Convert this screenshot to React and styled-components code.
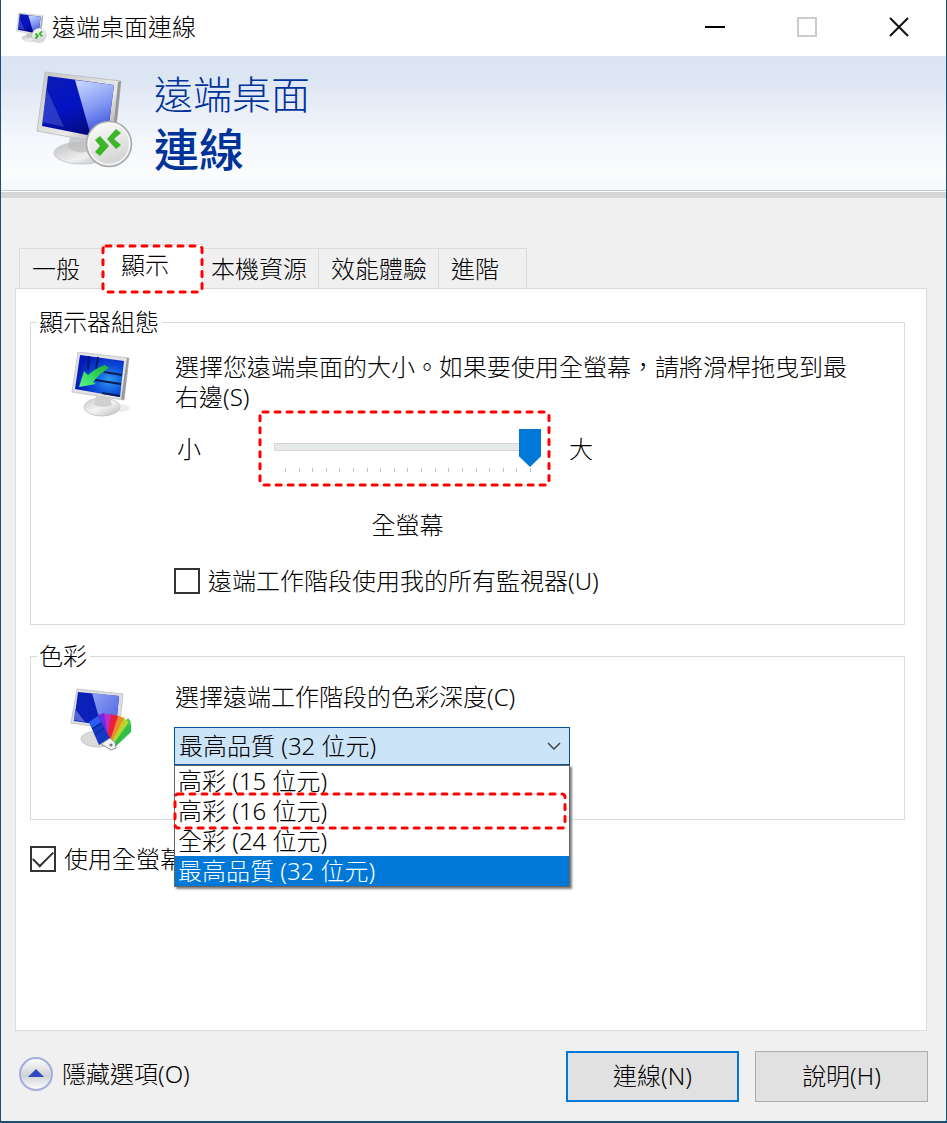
import React, { useState } from 'react';
import styled, { createGlobalStyle, css } from 'styled-components';

const options = ['高彩 (15 位元)', '高彩 (16 位元)', '全彩 (24 位元)', '最高品質 (32 位元)'];
const ticks = Array.from({ length: 19 }, (_, i) => i);

function RemoteIcon({ size, id }) {
    return (
        <svg width={size} height={size} viewBox="36 70 98 98" aria-hidden="true">
            <defs>
                <linearGradient id={id + 'frame'} x1="0" y1="0" x2="1" y2="1">
                    <stop offset="0" stopColor="#c4c4c0" />
                    <stop offset="0.6" stopColor="#e9e9e7" />
                    <stop offset="1" stopColor="#8f8f8f" />
                </linearGradient>
                <linearGradient id={id + 'dark'} x1="0" y1="0" x2="0.5" y2="1">
                    <stop offset="0" stopColor="#0a1cb4" />
                    <stop offset="0.55" stopColor="#0413c4" />
                    <stop offset="1" stopColor="#020a78" />
                </linearGradient>
                <linearGradient id={id + 'light'} x1="0.3" y1="0" x2="0.6" y2="1">
                    <stop offset="0" stopColor="#c3d2ff" />
                    <stop offset="0.5" stopColor="#7f95f2" />
                    <stop offset="1" stopColor="#2c40d4" />
                </linearGradient>
                <linearGradient id={id + 'base'} x1="0" y1="0" x2="1" y2="1">
                    <stop offset="0" stopColor="#bdbdbd" />
                    <stop offset="0.6" stopColor="#efefef" />
                    <stop offset="1" stopColor="#b5b5b5" />
                </linearGradient>
                <linearGradient id={id + 'disc'} x1="0" y1="0" x2="0.4" y2="1">
                    <stop offset="0" stopColor="#ffffff" />
                    <stop offset="1" stopColor="#d4d4d4" />
                </linearGradient>
            </defs>
            <ellipse cx="82" cy="153" rx="28" ry="11" fill={`url(#${id}base)`} stroke="#c9ccd0" />
            <path d="M70 136l-2 12q10 7 22 3l-1-12z" fill="#b9babc" opacity="0.7" />
            <path d="M45 72l76 9-7 64-77-14z" fill={`url(#${id}frame)`} stroke="#bfc2c6" strokeWidth="1" />
            <path d="M118 82l3-1-6 58-3 2z" fill="#96999c" />
            <path d="M48 76l66 9-7 54-65-13z" fill={`url(#${id}dark)`} />
            <path d="M75 80l39 5-7 54-16-3z" fill={`url(#${id}light)`} />
            <path d="M47 90l17 37-22-5z" fill="#7481d8" opacity="0.35" />
            <circle cx="109" cy="144" r="22.5" fill={`url(#${id}disc)`} stroke="#aaadb0" strokeWidth="1.6" />
            <circle cx="109" cy="144" r="20.5" fill="none" stroke="#f7f7f7" strokeWidth="1.4" />
            <path d="M95 140l5-4 9 10-9 10-5-4 5-6z" fill="#3cb528" />
            <path d="M116 129l5 4-7 6 7 6-5 4-9-10z" fill="#3cb528" />
        </svg>
    );
}

function DisplayIcon() {
    return (
        <svg width="66" height="68" viewBox="0 2 66 68" aria-hidden="true">
            <defs>
                <radialGradient id="displayScreen" cx="0.7" cy="0.6" r="0.7">
                    <stop offset="0" stopColor="#2d9cf0" />
                    <stop offset="0.5" stopColor="#0c4ad8" />
                    <stop offset="1" stopColor="#0218b8" />
                </radialGradient>
                <linearGradient id="displayBase" x1="0" y1="0" x2="1" y2="1">
                    <stop offset="0" stopColor="#c9c9c9" />
                    <stop offset="0.5" stopColor="#f4f4f4" />
                    <stop offset="1" stopColor="#b8b8b8" />
                </linearGradient>
                <linearGradient id="displayArrow" x1="1" y1="0" x2="0" y2="1">
                    <stop offset="0" stopColor="#1fae35" />
                    <stop offset="0.5" stopColor="#35d65c" />
                    <stop offset="1" stopColor="#5df58c" />
                </linearGradient>
            </defs>
            <ellipse cx="48" cy="58" rx="12" ry="4" fill="#ececec" />
            <ellipse cx="32" cy="57" rx="18" ry="9" fill="url(#displayBase)" stroke="#cacaca" />
            <path d="M26 46l-2 9q9 4 18 0l-2-7z" fill="#d0d0d0" />
            <path d="M8 2l51 6-5 42-52-8z" fill="#e2e2e2" stroke="#c8c8c8" />
            <path d="M57 8l2 0-5 42-3-1z" fill="#9a9a9a" />
            <path d="M10 5l44 6-4 36-45-8z" fill="url(#displayScreen)" />
            <path d="M19 6l-1 14M28 7l-2 12" stroke="#071a66" strokeWidth="2" />
            <path d="M34 22l18 3M25 30l26 4M32 43l18 3" stroke="#0a1c56" strokeWidth="2" />
            <path d="M35 15l4 3q-9 5-16 14l3 2-17 3 5-16 4 4q8-7 17-10z" fill="url(#displayArrow)" />
        </svg>
    );
}

function ColorIcon() {
    return (
        <svg width="66" height="68" viewBox="0 0 66 68" aria-hidden="true">
            <defs>
                <linearGradient id="colorScreen" x1="0" y1="0" x2="1" y2="1">
                    <stop offset="0" stopColor="#8fa2f4" />
                    <stop offset="1" stopColor="#4a62e2" />
                </linearGradient>
            </defs>
            <ellipse cx="28" cy="51" rx="17" ry="8" fill="#dadada" stroke="#cacaca" />
            <path d="M7 1l46 5-4 36-48-7z" fill="#dedede" stroke="#c8c8c8" />
            <path d="M8 4l41 4-3 31-42-6z" fill="#0a20b8" />
            <path d="M22 5l27 3-3 31-15-2z" fill="url(#colorScreen)" />
            <path d="M5 21l10 13-11-2z" fill="#5567cf" />
            <path d="M61 34l-3-4-18 26 4 5z" fill="#36c94c" />
            <path d="M61 35l0 9-18 17-4-5z" fill="#2fc048" />
            <path d="M53 29l6 5-17 24-5-5z" fill="#b4d62c" />
            <path d="M47 27l7 3-14 27-5-5z" fill="#f08a2a" />
            <path d="M40 26l8 2-9 28-5-4z" fill="#e8203c" />
            <path d="M33 25l8 2-5 27-6-6z" fill="#c02ad0" />
            <path d="M28 27l6-2 4 27-5-2z" fill="#6a2de0" />
            <path d="M19 34l9-6 12 22-11 7z" fill="#1438c4" />
            <path d="M19 34l9-6 3 6-9 6z" fill="#2c5cf4" />
            <path d="M22 41l9-6M25 46l9-6" stroke="#0a2080" />
            <path d="M31 56l9-6 5 4 1 6-5 2z" fill="#f2f2f2" stroke="#8a8a8a" />
            <circle cx="41" cy="57" r="1.5" fill="#777" />
        </svg>
    );
}

function CollapseIcon() {
    return (
        <svg width="34" height="34" viewBox="0 0 34 34" aria-hidden="true">
            <defs>
                <linearGradient id="collapse" x1="0" y1="0" x2="0" y2="1">
                    <stop offset="0" stopColor="#ffffff" />
                    <stop offset="0.55" stopColor="#cfd2d4" />
                    <stop offset="1" stopColor="#ffffff" />
                </linearGradient>
            </defs>
            <circle cx="17" cy="17" r="16" fill="url(#collapse)" stroke="#a3addf" strokeWidth="2" />
            <path d="M17 12l8 8H9z" fill="#3048c0" />
        </svg>
    );
}

function Highlight() {
    return (
        <Dashes aria-hidden="true">
            <rect x="0" y="0" width="100%" height="100%" rx="3" />
        </Dashes>
    );
}

function App() {
    const [size, setSize] = useState(18);
    const [allMonitors, setAllMonitors] = useState(false);
    const [bar, setBar] = useState(true);
    const [depth, setDepth] = useState(options[3]);

    return (
        <Window>
            <GlobalStyle />
            <TitleBar>
                <RemoteIcon size={31} id="small" />
                <Title>遠端桌面連線</Title>
                <WindowButton aria-label="最小化">
                    <svg width="20" height="20"><path d="M0 10h20" stroke="#000" strokeWidth="2" /></svg>
                </WindowButton>
                <WindowButton aria-label="最大化" disabled>
                    <svg width="20" height="20"><path d="M1 1h18v18H1z" fill="none" stroke="#ccc" strokeWidth="2" /></svg>
                </WindowButton>
                <WindowButton aria-label="關閉">
                    <svg width="20" height="20"><path d="M1 1l18 18M19 1L1 19" stroke="#111" strokeWidth="2" /></svg>
                </WindowButton>
            </TitleBar>

            <Banner>
                <RemoteIcon size={98} id="large" />
                <BannerTitle>
                    遠端桌面
                    <strong>連線</strong>
                </BannerTitle>
            </Banner>

            <Body>
                <Tabs role="tablist">
                    <Tab role="tab">一般</Tab>
                    <Tab role="tab" aria-selected="true" $active>
                        顯示
                        <TabMark><Highlight /></TabMark>
                    </Tab>
                    <Tab role="tab" $tucked>本機資源</Tab>
                    <Tab role="tab">效能體驗</Tab>
                    <Tab role="tab">進階</Tab>
                </Tabs>

                <Panel role="tabpanel">
                    <Group>
                        <Legend>顯示器組態</Legend>
                        <GroupGrid $top={15} $bottom={28}>
                            <IconCell><DisplayIcon /></IconCell>
                            <div>
                                <Text htmlFor="size">選擇您遠端桌面的大小。如果要使用全螢幕，請將滑桿拖曳到最右邊(S)</Text>
                                <SliderRow>
                                    <Small>小</Small>
                                    <SliderBox>
                                        <Slider id="size" type="range" min="0" max="18" value={size} onChange={(e) => setSize(e.target.value)} />
                                        <Ticks>{ticks.map((t) => <Tick key={t} />)}</Ticks>
                                        <Highlight />
                                    </SliderBox>
                                    <Large>大</Large>
                                </SliderRow>
                                <SizeName>全螢幕</SizeName>
                                <CheckLabel>
                                    <Check type="checkbox" checked={allMonitors} onChange={() => setAllMonitors(!allMonitors)} />
                                    遠端工作階段使用我的所有監視器(U)
                                </CheckLabel>
                            </div>
                        </GroupGrid>
                    </Group>

                    <Group $gap={16}>
                        <Legend>色彩</Legend>
                        <GroupGrid $top={11} $bottom={54}>
                            <IconCell $low><ColorIcon /></IconCell>
                            <div>
                                <Text htmlFor="depth">選擇遠端工作階段的色彩深度(C)</Text>
                                <Combo>
                                    <Select id="depth" value={depth} onChange={(e) => setDepth(e.target.value)}>
                                        {options.map((o) => <option key={o}>{o}</option>)}
                                    </Select>
                                    <Arrow width="14" height="8" viewBox="0 0 14 8" aria-hidden="true">
                                        <path d="M1 1l6 6 6-6" />
                                    </Arrow>
                                    <List role="listbox" aria-label="色彩深度">
                                        {options.map((o, i) => (
                                            <Option key={o} role="option" aria-selected={o === depth} $selected={o === depth} onClick={() => setDepth(o)}>
                                                {o}
                                                {i === 1 && <OptionMark><Highlight /></OptionMark>}
                                            </Option>
                                        ))}
                                    </List>
                                </Combo>
                            </div>
                        </GroupGrid>
                    </Group>

                    <CheckLabel $gap={24}>
                        <Check type="checkbox" checked={bar} onChange={() => setBar(!bar)} />
                        使用全螢幕
                    </CheckLabel>
                </Panel>

                <Footer>
                    <Collapse>
                        <CollapseIcon />
                        隱藏選項(O)
                    </Collapse>
                    <Button $primary>連線(N)</Button>
                    <Button>說明(H)</Button>
                </Footer>
            </Body>
        </Window>
    );
}
export default App;

const line = '#dcdcdc';
const blue = '#0078d7';

const GlobalStyle = createGlobalStyle`
    *{
        box-sizing: border-box;
    }

    body{
        margin: 0;
    }

    body, button, input, select{
        font-family: "Noto Sans", "Noto Sans CJK TC", sans-serif;
        font-size: 24px;
        font-weight: 300;
        line-height: 30px;
        color: #000;
    }

    svg{
        display: block;
        flex: none;
    }
`;

const Window = styled.div`
    display: flex;
    flex-direction: column;
    min-height: 100vh;
    background-color: #f0f0f0;
    border: solid #1b4f72;
    border-width: 0 1px 2px;
`;

const TitleBar = styled.header`
    display: flex;
    align-items: center;
    height: 56px;
    padding: 0 1px 2px 15px;
    background-color: #fff;
`;

const Title = styled.span`
    flex: 1;
    margin-left: 5px;
`;

const WindowButton = styled.button`
    display: flex;
    align-items: center;
    justify-content: center;
    width: 92px;
    height: 54px;
    padding: 0;
    border: none;
    background: none;
`;

const Banner = styled.div`
    display: flex;
    align-items: center;
    gap: 20px;
    height: 142px;
    padding: 0 35px 10px;
    background: linear-gradient(#dae4f3 0%, #dce6f3 16%, #e1e8f5 23%, #f3f6fb 60%, #fbfdfd 88%, #f2f7fb 100%);
    border-bottom: 6px solid #d6d6d6;
    box-shadow: inset 0 -1px #fff, inset 0 -2px #c8c8c8;
`;

const BannerTitle = styled.h1`
    margin: 0;
    padding-top: 10px;
    font-size: 39px;
    font-weight: 300;
    line-height: 52px;
    color: #003399;

    strong{
        display: block;
        font-size: 45px;
        font-weight: 500;
        line-height: 60px;
    }
`;

const Body = styled.main`
    display: flex;
    flex: 1;
    flex-direction: column;
    padding: 46px 18px 19px 14px;
`;

const Tabs = styled.div`
    display: flex;
    align-items: flex-end;
    height: 45px;
    padding-left: 4px;
`;

const Tab = styled.button`
    min-width: 88px;
    height: 41px;
    padding: 0 11px 0 12px;
    border: solid ${line};
    border-width: 1px 1px 1px 0;
    background-color: #f0f0f0;
    text-align: left;

    &:first-child{
        border-left-width: 1px;
    }

    ${(props) => props.$tucked && css`
        margin-left: -4px;
    `}

    ${(props) => props.$active && css`
        position: relative;
        z-index: 1;
        width: 101px;
        height: 45px;
        margin-left: -5px;
        padding: 0 0 4px 19px;
        border-bottom: none;
        background-color: #fff;
    `}
`;

const TabMark = styled.span`
    position: absolute;
    inset: 1px 0 -3px 1px;
`;

/* red dashed frame laid over the marked control */
const Dashes = styled.svg`
    position: absolute;
    inset: 0;
    width: 100%;
    height: 100%;
    overflow: visible;
    pointer-events: none;

    rect{
        fill: none;
        stroke: #ff0000;
        stroke-width: 3;
        stroke-linecap: round;
        stroke-dasharray: 5 7;
    }
`;

const Panel = styled.section`
    flex: 1;
    margin: -1px 1px 0 0;
    padding: 18px 21px 14px 14px;
    border: 1px solid ${line};
    background-color: #fff;
`;

const Group = styled.fieldset`
    min-width: 0;
    margin: ${(props) => props.$gap || 0}px 0 0;
    padding: 0;
    border: 1px solid ${line};
`;

const Legend = styled.legend`
    margin-left: 6px;
    padding: 0 3px 0 2px;
`;

const GroupGrid = styled.div`
    display: grid;
    grid-template-columns: 143px 1fr;
    padding: ${(props) => props.$top}px 50px ${(props) => props.$bottom}px 0;
`;

const IconCell = styled.div`
    padding: ${(props) => (props.$low ? 6 : 0)}px 0 0 39px;
`;

const Text = styled.label`
    display: block;
    padding-left: 1px;
`;

const SliderRow = styled.div`
    display: flex;
    align-items: center;
`;

const Small = styled.span`
    width: 86px;
    padding-left: 3px;
`;

const Large = styled.span`
    margin-left: 20px;
`;

const SliderBox = styled.div`
    position: relative;
    width: 289px;
    height: 73px;
    padding: 17px 8px 0 14px;
`;

const Slider = styled.input`
    display: block;
    width: 100%;
    height: 38px;
    margin: 0;
    appearance: none;
    background: none;

    &::-webkit-slider-runnable-track{
        height: 8px;
        margin-bottom: 2px;
        border: 1px solid #d6d6d6;
        border-right: none;
        background-color: #e7eaea;
    }

    &::-webkit-slider-thumb{
        width: 22px;
        height: 38px;
        margin-top: -15px;
        appearance: none;
        background-color: ${blue};
        clip-path: polygon(0 0, 100% 0, 100% 72%, 50% 100%, 0 72%);
    }
`;

const Ticks = styled.div`
    display: flex;
    justify-content: space-between;
    margin-top: 1px;
    padding: 0 10px 0 11px;
`;

const Tick = styled.span`
    width: 1px;
    height: 4px;
    background-color: #c4c4c4;
`;

const SizeName = styled.div`
    width: 267px;
    margin: 25px 0 26px 100px;
    text-align: center;
`;

const CheckLabel = styled.label`
    display: flex;
    align-items: center;
    gap: 8px;
    margin-top: ${(props) => props.$gap || 0}px;
`;

const Check = styled.input`
    display: grid;
    place-items: center;
    width: 26px;
    height: 26px;
    margin: 0;
    appearance: none;
    border: 2px solid #333;
    background-color: #fff;

    &:checked::before{
        content: "";
        width: 18px;
        height: 9px;
        margin-top: -5px;
        border: solid #333;
        border-width: 0 0 2px 2px;
        transform: rotate(-45deg);
    }
`;

const Combo = styled.div`
    position: relative;
    width: 396px;
    margin-top: 15px;
`;

const Select = styled.select`
    display: block;
    width: 100%;
    height: 38px;
    padding: 0 30px 0 4px;
    appearance: none;
    border: 1px solid #005499;
    border-radius: 0;
    background-color: #cce4f7;
`;

const Arrow = styled.svg`
    position: absolute;
    top: 15px;
    right: 9px;
    fill: none;
    stroke: #444;
    stroke-width: 1.5;
    pointer-events: none;
`;

const List = styled.ul`
    position: absolute;
    z-index: 2;
    top: 100%;
    left: 0;
    width: 100%;
    margin: 0;
    padding: 0;
    list-style: none;
    border: 1px solid #646464;
    background-color: #fff;
    box-shadow: 2px 2px 2px #808080;
`;

const Option = styled.li`
    position: relative;
    padding-left: 3px;
    background-color: ${(props) => (props.$selected ? blue : '#fff')};
    color: ${(props) => (props.$selected ? '#fff' : '#000')};
`;

const OptionMark = styled.span`
    position: absolute;
    z-index: 1;
    inset: -2px 4px -2px 0;
`;

const Footer = styled.footer`
    display: flex;
    align-items: center;
    gap: 16px;
    padding-top: 20px;
`;

const Collapse = styled.button`
    display: flex;
    align-items: center;
    gap: 9px;
    margin-right: auto;
    padding: 0 0 6px 4px;
    border: none;
    background: none;
`;

const Button = styled.button`
    width: 173px;
    height: 51px;
    padding: 0 0 2px;
    border: ${(props) => (props.$primary ? `2px solid ${blue}` : '1px solid #adadad')};
    background-color: #e1e1e1;
`;
